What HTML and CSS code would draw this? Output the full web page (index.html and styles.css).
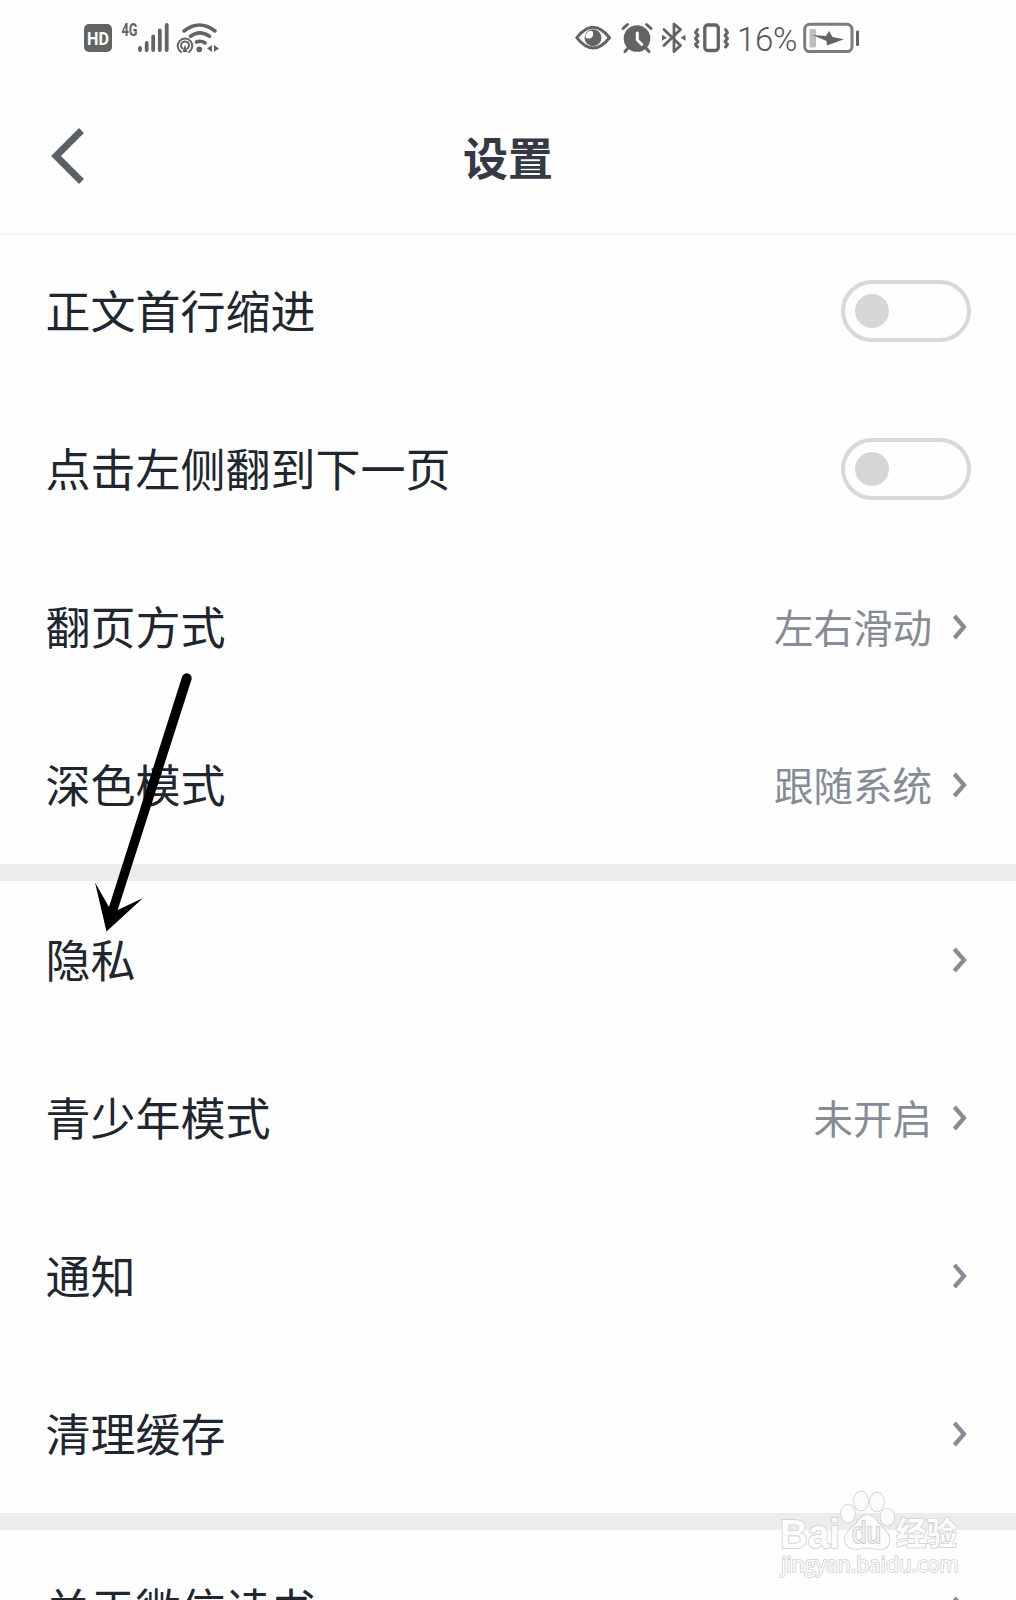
FILE: index.html
```html
<!DOCTYPE html>
<html lang="zh-CN">
<head>
<meta charset="utf-8">
<title>设置</title>
<link rel="stylesheet" href="styles.css">
</head>
<body>
<svg class="defs" aria-hidden="true">
  <symbol id="chevron" viewBox="0 0 16 26"><path d="M2.400 2 12 13 2.400 24" fill="none" stroke="currentColor" stroke-width="4.200"/></symbol>
</svg>
<div class="screen">
  <div class="status">
    <div class="status-group">
      <svg width="34" height="40" viewBox="84 20 34 40"><rect x="84" y="24" width="28" height="28" rx="5"/><text x="87" y="45" class="hd" textLength="22" lengthAdjust="spacingAndGlyphs">HD</text></svg>
      <svg width="20" height="40" viewBox="118 20 20 40"><text x="121.500" y="36" class="net" textLength="16" lengthAdjust="spacingAndGlyphs">4G</text></svg>
      <svg width="34" height="40" viewBox="138 20 34 40"><path class="line" stroke-width="3.800" d="M140 48v2M146.700 43v7M153.200 36.500V50M159.800 30.500V50M166.700 25V50"/></svg>
      <svg width="48" height="40" viewBox="172 20 48 40"><path class="line" stroke-width="3.600" d="M184 31Q199.500 19 215 31M190.500 36.300Q199.500 29.500 209.500 36.300M196.500 42Q201 40 205 43"/><circle cx="199.300" cy="49.300" r="2.900"/><path class="line" stroke-width="2" d="M181 52A7.300 7.300 0 1 1 189 52M182.500 48.500A4 4 0 1 1 187.500 48.500"/><path d="M185 44.500l2.500 7.500h-5zM212 45v7l-5-3.500zM214 45v7l5-3.500z"/></svg>
    </div>
    <div class="status-group">
      <svg width="42" height="40" viewBox="575 20 42 40"><path class="line" stroke-width="3" d="M576.800 37.700Q593 17 609.500 37.700Q593 58.500 576.800 37.700Z"/><circle cx="593" cy="37.800" r="8.500"/><path fill="#fefefe" d="M588 31.500Q594 29 593 35Q592 40 586 38Q584 36 588 31.500Z"/></svg>
      <svg width="40" height="40" viewBox="617 20 40 40"><circle cx="637" cy="38.500" r="13.300"/><path class="line" stroke-width="3" d="M623 28.500l4.500-4M646.500 24.500l4.500 4M628 48l-3 3.500M646 48l3 3.500"/><path fill="none" stroke="#fefefe" stroke-width="3" stroke-linecap="round" d="M637.300 33v7l4.500 4.500"/></svg>
      <svg width="33" height="40" viewBox="657 20 33 40"><path class="line" stroke-width="2.800" d="M664 29.500 680.500 45.500 674 51.500V24l6.500 5.500L664 45.500"/><path d="M662 34.800l5 3-5 3zM685.500 34.800l-5 3 5 3z"/></svg>
      <svg width="46" height="40" viewBox="690 20 46 40"><rect class="line" stroke-width="3.300" x="704.800" y="25" width="13.500" height="25.500" rx="3"/><path class="line" stroke-width="3" d="M697.500 29.500l-2 3 2.500 3-2.500 3 2.500 3-2.500 3 2 2.500M725.500 29.500l2 3-2.500 3 2.500 3-2.500 3 2.500 3-2 2.500"/></svg>
      <span class="percent">16%</span>
      <svg width="60" height="40" viewBox="801 20 60 40"><rect x="804.700" y="24.300" width="47.300" height="27.300" rx="5" fill="none" stroke="#7d7d7d" stroke-width="3"/><rect x="809.500" y="29" width="6.500" height="18.500" rx="1.500" fill="#bdbdbd"/><path d="M812.500 35l13.500 1 3-5 3.500 6 11.500 2.300-17 6.200-.5-4.500z"/><rect x="856" y="30.500" width="3" height="15.500" rx="1.300"/></svg>
    </div>
  </div>
  <header class="header">
    <svg class="back" width="36" height="60" viewBox="0 0 36 60"><path d="M31.500 4.500 6 30l25.500 25.500" fill="none" stroke="currentColor" stroke-width="7"/></svg>
    <h1>设置</h1>
  </header>
  <main>
    <section class="group">
      <div class="row"><span class="label">正文首行缩进</span><i class="toggle"></i></div>
      <div class="row"><span class="label">点击左侧翻到下一页</span><i class="toggle"></i></div>
      <div class="row"><span class="label">翻页方式</span><span class="value"><span>左右滑动</span><svg class="chev"><use href="#chevron"/></svg></span></div>
      <div class="row"><span class="label">深色模式</span><span class="value"><span>跟随系统</span><svg class="chev"><use href="#chevron"/></svg></span></div>
    </section>
    <section class="group">
      <div class="row"><span class="label">隐私</span><svg class="chev"><use href="#chevron"/></svg></div>
      <div class="row"><span class="label">青少年模式</span><span class="value"><span>未开启</span><svg class="chev"><use href="#chevron"/></svg></span></div>
      <div class="row"><span class="label">通知</span><svg class="chev"><use href="#chevron"/></svg></div>
      <div class="row"><span class="label">清理缓存</span><svg class="chev"><use href="#chevron"/></svg></div>
    </section>
    <section class="group">
      <div class="row"><span class="label">关于微信读书</span><svg class="chev"><use href="#chevron"/></svg></div>
    </section>
  </main>
  <svg class="arrow" width="60" height="264" viewBox="90 670 60 264"><path d="M182 677 109 907 95 882.500 106.500 931.500 143 898 117.700 910 191.500 679.500A4.700 4.700 0 0 0 182 677Z"/></svg>
  <svg class="mark" width="200" height="100" viewBox="770 1485 200 100">
    <text class="mark-latin" x="780" y="1547.500" textLength="60" lengthAdjust="spacingAndGlyphs">Bai</text>
    <g class="paw"><ellipse cx="848" cy="1513.500" rx="7" ry="9"/><ellipse cx="861" cy="1501" rx="7" ry="9.500"/><ellipse cx="877" cy="1502" rx="7" ry="9.500"/><ellipse cx="887.500" cy="1517" rx="7" ry="8.500"/><path d="M867 1515C875 1515 877 1523 884 1529C892 1536 892 1549 880 1549C872 1549 868 1547 862 1548C853 1551 844 1547 845 1538C846 1530 855 1527 858 1521Q862 1515 867 1515Z"/></g>
    <text class="mark-du" x="852" y="1543" textLength="29" lengthAdjust="spacingAndGlyphs">du</text>
    <text class="mark-cjk" x="896" y="1545" textLength="61" lengthAdjust="spacingAndGlyphs">经验</text>
    <text class="mark-url" x="781" y="1572" textLength="178" lengthAdjust="spacingAndGlyphs">jingyan.baidu.com</text>
  </svg>
</div>
</body>
</html>
```
FILE: styles.css
```css
* { box-sizing: border-box; }
body { margin: 0; background: #fefefe; font-family: "Noto Sans CJK SC", sans-serif; color: #20262f; }
.defs { position: absolute; width: 0; height: 0; }
.screen { position: relative; height: 1600px; overflow: hidden; }

.status { display: flex; justify-content: space-between; height: 76px; padding: 20px 155px 16px 84px; font-family: Roboto, sans-serif; }
.status-group { display: flex; align-items: center; }
.status svg { display: block; fill: #636363; overflow: visible; }
.status .line { fill: none; stroke: #636363; stroke-linecap: round; stroke-linejoin: round; }
.status .hd { fill: #fefefe; font: 700 18px Roboto, sans-serif; }
.status .net { fill: #636363; font: 700 17.5px Roboto, sans-serif; }
.percent { width: 65px; padding-left: 1px; font-size: 33px; font-weight: 300; line-height: 40px; color: #555; letter-spacing: -0.3px; }

.header { position: relative; display: grid; grid-template-columns: 1fr auto 1fr; align-items: center; height: 157px; padding: 2px 50px 0; box-shadow: 0 2px 0 #f3f3f4; }
.header h1 { margin: 0; font-size: 45px; font-weight: 700; line-height: 64px; color: #343a44; transform: translateY(1px); }
.back { color: #5b616b; }
main { margin-top: -1px; }

.group + .group { border-top: 17px solid #ebecee; }
.row { display: flex; align-items: center; justify-content: space-between; height: 158px; padding: 0 45px 0 45.5px; font-size: 45px; line-height: 60px; }
.label { padding-bottom: 2px; }
.value { display: flex; align-items: center; font-size: 39.5px; color: #868c96; }
.value span { padding-bottom: 2px; }
.chev { width: 16px; height: 26px; margin: 0 3px 0 20px; color: #868c96; }
.toggle { display: flex; align-items: center; width: 130px; height: 62px; padding-left: 10px; border: 4px solid #d8d8d8; border-radius: 31px; }
.toggle::before { content: ""; width: 34px; height: 34px; border-radius: 50%; background: #d6d6d6; }

.arrow { position: absolute; left: 90px; top: 670px; overflow: visible; }
.mark { position: absolute; left: 770px; top: 1485px; }
.mark text, .paw { fill: #fcfcfc; stroke: #cfcfcf; stroke-width: 1.6px; paint-order: stroke; }
.mark-latin { font: 700 41px "Liberation Sans", sans-serif; }
.mark .mark-du { font: 400 29px "Liberation Sans", sans-serif; fill: #f0f0f0; stroke: #c4c4c4; }
.mark-cjk { font: 700 32px "Noto Sans CJK SC", sans-serif; }
.mark-url { font: 400 21px "Open Sans", sans-serif; }
```
